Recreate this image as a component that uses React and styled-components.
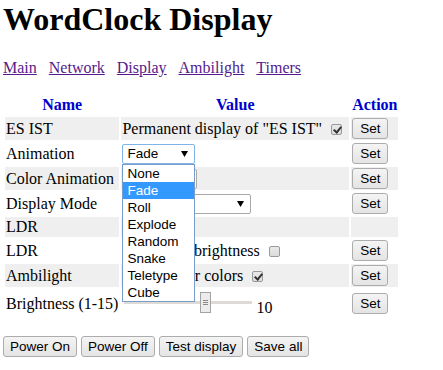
import React from "react";
import styled, { createGlobalStyle } from "styled-components";

const GlobalStyle = createGlobalStyle`
  body {
    margin: 0;
    padding: 1px 0 0 3px;
    background: #fff;
    color: #000;
    font-family: "Liberation Serif", "Times New Roman", serif;
    font-size: 16px;
  }
`;

const Title = styled.h1`
  margin: 0 0 21px;
  font-size: 32px;
  font-weight: bold;
`;

const Nav = styled.p`
  display: flex;
  gap: 12px;
  margin: 0 0 16px;
`;

const NavLink = styled.a`
  color: #551a8b;
  text-decoration: underline;
`;

const Table = styled.table`
  border-spacing: 2px;
  border-collapse: separate;
`;

const Th = styled.th`
  padding: 1px;
  color: #0000cd;
  font-weight: bold;
  text-align: center;
`;

const Td = styled.td`
  padding: 1px;
  white-space: nowrap;
  vertical-align: middle;
  background: ${(p) => (p.$shade ? "#efefef" : "transparent")};
`;

const Button = styled.button`
  height: 21px;
  padding: 0 7px;
  border: 1px solid #acacac;
  border-radius: 3px;
  background: linear-gradient(#f4f4f4, #e4e4e4);
  color: #000;
  font-family: "Liberation Sans", Arial, sans-serif;
  font-size: 13.5px;
  vertical-align: middle;
`;

const FooterButton = styled(Button)`
  padding: 0 6px;
`;

const Check = styled.input.attrs({ type: "checkbox", readOnly: true })`
  appearance: none;
  position: relative;
  width: 11px;
  height: 11px;
  margin: 0 6px 0 5px;
  border: 1px solid #9a9a9a;
  border-radius: 2px;
  background: linear-gradient(#e9e9e9, #dcdcdc);
  vertical-align: -1px;

  &:checked::after {
    content: "";
    position: absolute;
    left: 3px;
    top: 0px;
    width: 3px;
    height: 6px;
    border: solid #333;
    border-width: 0 2px 2px 0;
    transform: rotate(40deg);
  }
`;

const SelectWrap = styled.span`
  position: relative;
  display: inline-block;
  vertical-align: middle;
`;

const SelectBox = styled.span`
  box-sizing: border-box;
  display: flex;
  align-items: center;
  justify-content: space-between;
  width: ${(p) => p.$width}px;
  height: 20px;
  padding: 0 6px 0 4px;
  border: 1px solid ${(p) => (p.$focused ? "#7eb4ea" : "#a9a9a9")};
  border-radius: 2px;
  background: #fff;
  font-family: "Liberation Sans", Arial, sans-serif;
  font-size: 13.5px;
`;

const DropList = styled.ul`
  position: absolute;
  top: 100%;
  left: 0;
  z-index: 10;
  box-sizing: border-box;
  width: 73px;
  margin: 0;
  padding: 0;
  list-style: none;
  border: 1px solid #7a9cc8;
  background: #fff;
  font-family: "Liberation Sans", Arial, sans-serif;
  font-size: 13.5px;
`;

const DropItem = styled.li`
  height: 17px;
  line-height: 17px;
  padding-left: 4px;
  background: ${(p) => (p.$active ? "#3399ff" : "transparent")};
  color: ${(p) => (p.$active ? "#fff" : "#000")};
`;

const Slider = styled.input.attrs({ type: "range", readOnly: true })`
  appearance: none;
  width: 128px;
  height: 21px;
  margin: 2px 0 0 2px;
  background: transparent;
  vertical-align: baseline;

  &::-webkit-slider-runnable-track {
    height: 3px;
    background: #dedbd6;
  }

  &::-webkit-slider-thumb {
    appearance: none;
    box-sizing: border-box;
    width: 11px;
    height: 21px;
    margin-top: -9px;
    border: 1px solid #a3a3a3;
    background:
      linear-gradient(#8a8a8a, #8a8a8a) 2px 7px / 5px 1px no-repeat,
      linear-gradient(#8a8a8a, #8a8a8a) 2px 9px / 5px 1px no-repeat,
      linear-gradient(#8a8a8a, #8a8a8a) 2px 11px / 5px 1px no-repeat,
      #ececec;
  }
`;

const Footer = styled.div`
  display: flex;
  gap: 4px;
  margin-top: 16px;
`;

const Arrow = () => (
  <svg width="7" height="6" viewBox="0 0 7 6">
    <polygon points="0,0 7,0 3.5,6" fill="#000" />
  </svg>
);

const Select = ({ value, width, focused, children }) => (
  <SelectWrap>
    <SelectBox $width={width} $focused={focused}>
      <span>{value}</span>
      <Arrow />
    </SelectBox>
    {children}
  </SelectWrap>
);

const animations = ["None", "Fade", "Roll", "Explode", "Random", "Snake", "Teletype", "Cube"];

const App = () => {
  return (
    <>
      <GlobalStyle />
      <Title>WordClock Display</Title>
      <Nav>
        <NavLink href="#main">Main</NavLink>
        <NavLink href="#network">Network</NavLink>
        <NavLink href="#display">Display</NavLink>
        <NavLink href="#ambilight">Ambilight</NavLink>
        <NavLink href="#timers">Timers</NavLink>
      </Nav>
      <Table>
        <thead>
          <tr>
            <Th>Name</Th>
            <Th>Value</Th>
            <Th>Action</Th>
          </tr>
        </thead>
        <tbody>
          <tr>
            <Td $shade>ES IST</Td>
            <Td $shade>
              Permanent display of "ES IST" <Check checked />
            </Td>
            <Td $shade>
              <Button>Set</Button>
            </Td>
          </tr>
          <tr>
            <Td>Animation</Td>
            <Td>
              <Select value="Fade" width={73} focused>
                <DropList>
                  {animations.map((a) => (
                    <DropItem key={a} $active={a === "Fade"}>
                      {a}
                    </DropItem>
                  ))}
                </DropList>
              </Select>
            </Td>
            <Td>
              <Button>Set</Button>
            </Td>
          </tr>
          <tr>
            <Td $shade>Color Animation</Td>
            <Td $shade>
              <Select value="Rainbow" width={75} />
            </Td>
            <Td $shade>
              <Button>Set</Button>
            </Td>
          </tr>
          <tr>
            <Td>Display Mode</Td>
            <Td>
              <Select value="Normal" width={129} />
            </Td>
            <Td>
              <Button>Set</Button>
            </Td>
          </tr>
          <tr>
            <Td $shade>LDR</Td>
            <Td $shade>512</Td>
            <Td $shade />
          </tr>
          <tr>
            <Td>LDR</Td>
            <Td>
              Automatic brightness <Check />
            </Td>
            <Td>
              <Button>Set</Button>
            </Td>
          </tr>
          <tr>
            <Td $shade>Ambilight</Td>
            <Td $shade>
              Use number colors <Check checked />
            </Td>
            <Td $shade>
              <Button>Set</Button>
            </Td>
          </tr>
          <tr>
            <Td>Brightness (1-15)</Td>
            <Td>
              <Slider min={1} max={15} defaultValue={10} /> 10
            </Td>
            <Td>
              <Button>Set</Button>
            </Td>
          </tr>
        </tbody>
      </Table>
      <Footer>
        <FooterButton>Power On</FooterButton>
        <FooterButton>Power Off</FooterButton>
        <FooterButton>Test display</FooterButton>
        <FooterButton>Save all</FooterButton>
      </Footer>
    </>
  );
};

export default App;
